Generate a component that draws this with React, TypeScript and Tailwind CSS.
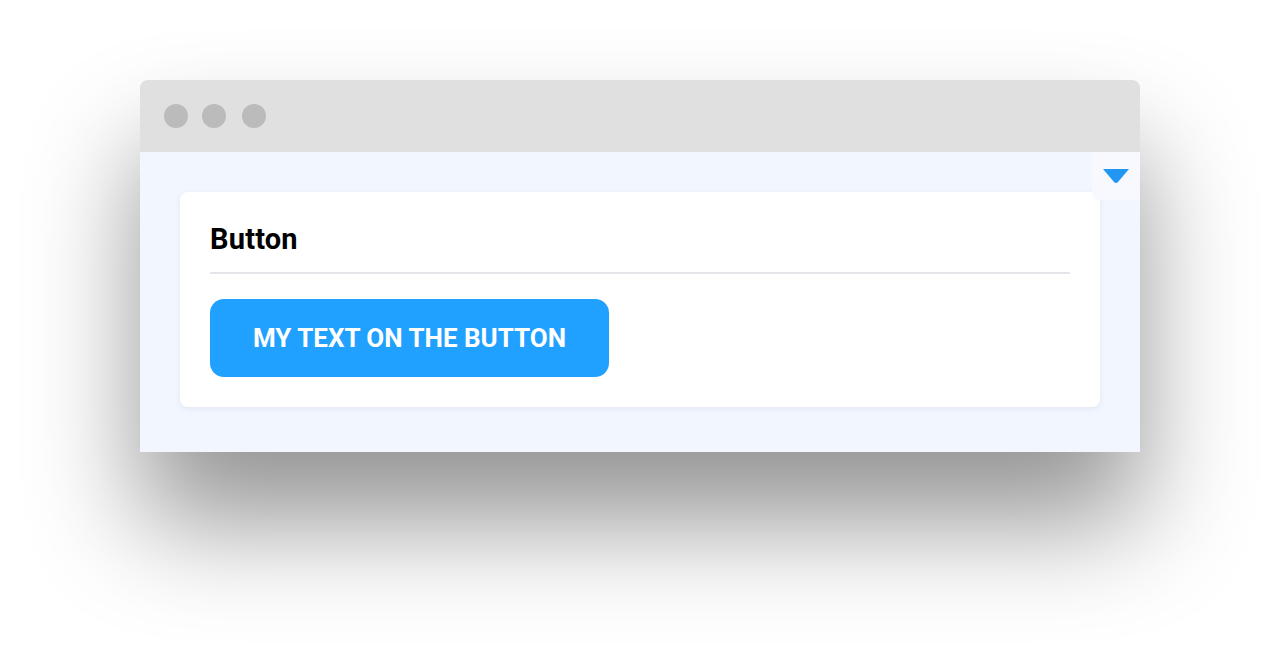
import React from "react";

export default function App() {
  return (
    <div className="w-[1280px] h-[652px] bg-white overflow-hidden" style={{ fontFamily: "Roboto, 'Liberation Sans', sans-serif" }}>
      <div className="ml-[140px] mt-[80px] w-[1000px] h-[372px] flex flex-col rounded-t-[8px] shadow-[0_70px_110px_rgba(0,0,0,0.42)]">
        <div className="h-[72px] bg-[#e0e0e0] rounded-t-[8px] flex items-center pl-[24px]">
          <span className="w-[24px] h-[24px] rounded-full bg-[#bbbbbb]" />
          <span className="w-[24px] h-[24px] rounded-full bg-[#bbbbbb] ml-[14px]" />
          <span className="w-[24px] h-[24px] rounded-full bg-[#bbbbbb] ml-[16px]" />
        </div>
        <div className="relative flex-1 bg-[#f2f6fe] pt-[40px] px-[40px]">
          <div className="absolute right-0 top-0 w-[48px] h-[48px] bg-[#f7f9ff] rounded-bl-[8px] flex items-center justify-center">
            <svg width="26" height="15" viewBox="0 0 26 15">
              <path d="M0 0 H26 L15 13 Q13 15 11 13 Z" fill="#2196f3" />
            </svg>
          </div>
          <div className="bg-white rounded-[8px] shadow-[0_2px_6px_rgba(40,60,120,0.08)] px-[30px] pt-[30px] pb-[30px]">
            <div className="text-[29px] font-bold text-black leading-[34px] tracking-[0.2px]">Button</div>
            <div className="h-[2px] bg-[#e3e5e8] mt-[16px]" />
            <button className="mt-[25px] w-[399px] h-[78px] bg-[#21a1ff] rounded-[14px] text-white text-[26px] font-bold uppercase flex items-center justify-center">
              My text on the button
            </button>
          </div>
        </div>
      </div>
    </div>
  );
}
